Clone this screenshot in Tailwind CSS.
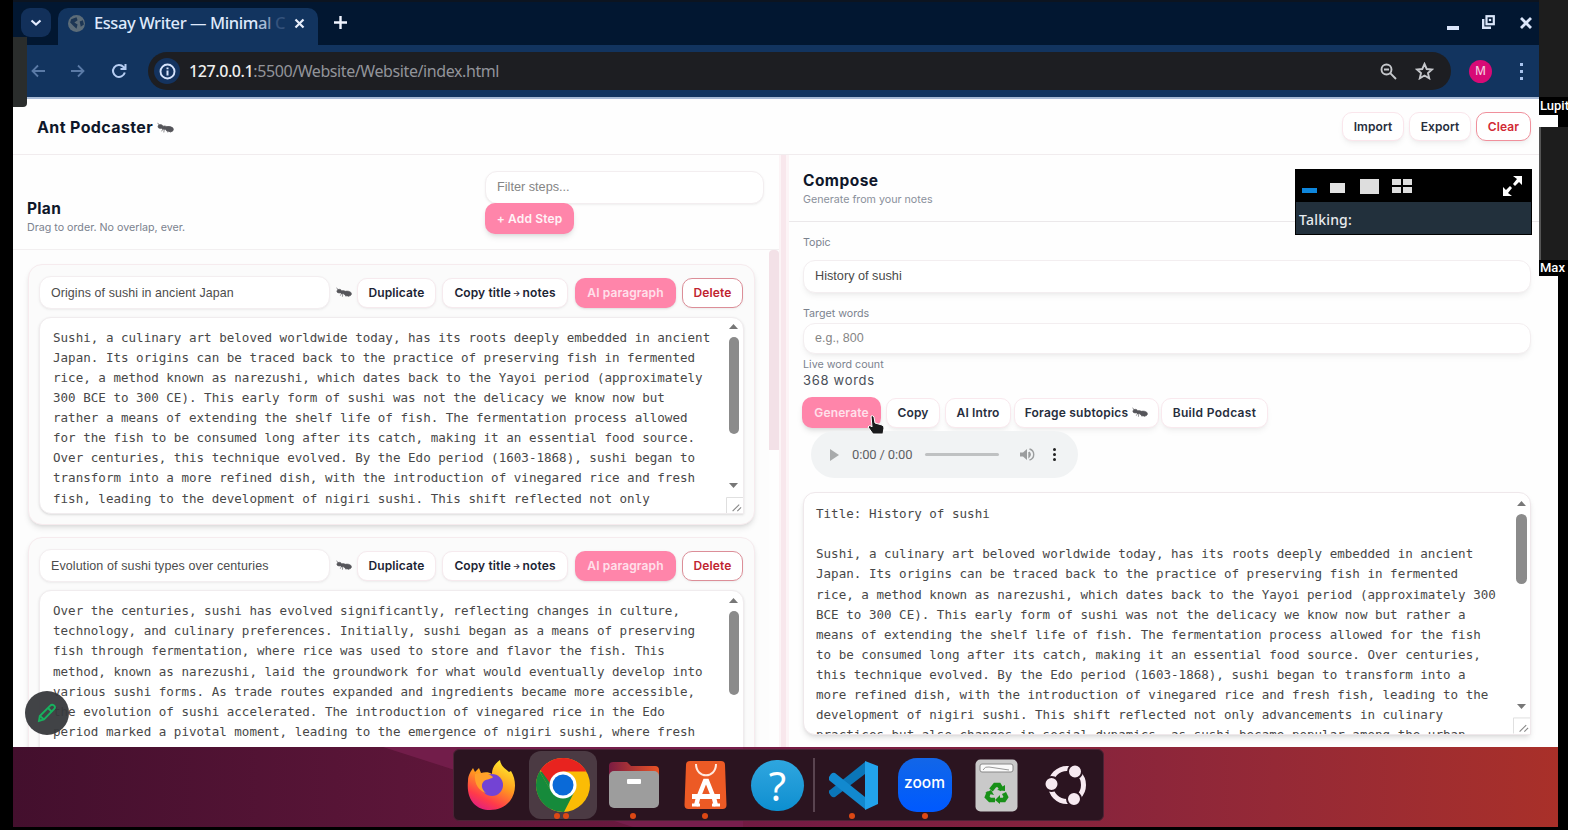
<!DOCTYPE html>
<html lang="en">
<head>
<meta charset="utf-8">
<title>Essay Writer — Minimal</title>
<script src="https://cdn.jsdelivr.net/npm/@tailwindcss/browser@4"></script>
</head>
<body class="bg-white overflow-hidden">
<svg class="hidden">
  <symbol id="ant" viewBox="0 0 30 22"><g fill="#55555a" stroke="#55555a" stroke-width="1.200"><ellipse cx="22" cy="12" rx="7" ry="4.500" transform="rotate(12 22 12)"/><ellipse cx="13" cy="9.500" rx="5" ry="3"/><ellipse cx="6" cy="7.500" rx="4.200" ry="3.500"/><path fill="none" d="M4 5L1 1M11 11L8 16M13 11L12 18M16 11L19 18M18 12L24 18"/></g></symbol>
  <symbol id="grip" viewBox="0 0 18 17"><path d="M.5 17V.5H18" fill="none" stroke="#ddd"/><path d="M7 15L14 8M12 15L16 11" stroke="#888" stroke-width="1.200"/></symbol>
</svg>
<div class="relative w-[1568px] h-[830px] bg-black overflow-hidden">
  <div class="ml-[13px] w-[1545px] h-[827px] flex flex-col bg-[#fefefe]">
    <!-- browser chrome -->
    <div class="w-[1526px] h-[99px] shrink-0 bg-[#12345f] border-b-2 border-[#a9bbd6] font-['Noto_Sans',sans-serif]">
      <div class="h-[45px] bg-[#021731] border-t-2 border-[#0c1420] flex items-end">
        <div class="ml-[8px] mb-[8px] w-[30px] h-[29px] rounded-[9px] bg-[#12305a] flex items-center justify-center">
          <svg class="w-[12px] h-[8px]" viewBox="0 0 12 8"><path d="M1.500 1.500L6 5.500L10.500 1.500" fill="none" stroke="#e4ecff" stroke-width="2.200"/></svg>
        </div>
        <div class="ml-[7px] w-[260px] h-[37px] rounded-t-[10px] bg-[#12345f] flex items-center pl-[10px] pr-[13px] pb-[7px]">
          <svg class="w-[17px] h-[17px] shrink-0" viewBox="0 0 16 16"><circle cx="8" cy="8" r="8" fill="#5c6c78"/><path d="M3 4l5-2 1 3-3 2 3 2-1 4-3-3-3-3zM11 6l3-1 1 4-3 2z" fill="#1d3654"/></svg>
          <div class="ml-[9px] w-[190px] whitespace-nowrap text-[16.500px] leading-[24px] tracking-[-0.420px] font-medium text-[#dfe9fb]">Essay Writer — Minim<span class="text-[#a9bbd6]">a</span><span class="text-[#7d93b5]">l</span> <span class="text-[#34527c]">C</span></div>
          <svg class="ml-auto w-[11px] h-[11px]" viewBox="0 0 11 11"><path d="M1.500 1.500l8 8M9.500 1.500l-8 8" stroke="#e8effc" stroke-width="2.200"/></svg>
        </div>
        <svg class="ml-[16px] mb-[16px] w-[13px] h-[13px]" viewBox="0 0 13 13"><path d="M6.500 0v13M0 6.500h13" stroke="#f1f5ff" stroke-width="2.400"/></svg>
        <div class="ml-auto mb-[15px] mr-[7px] flex items-end">
          <div class="w-[12px] h-[4px] mr-[23px] bg-[#dbe6fa]"></div>
          <svg class="w-[13px] h-[14px] mr-[25px] mb-[1px]" viewBox="0 0 13 14"><path d="M1.200 4v8.800H9" fill="none" stroke="#dbe6fa" stroke-width="2.400"/><rect x="4.500" y="1.200" width="7.300" height="8" fill="none" stroke="#dbe6fa" stroke-width="2.200"/><circle cx="8" cy="5" r="1.300" fill="#dbe6fa"/></svg>
          <svg class="w-[12px] h-[12px] mb-[1px]" viewBox="0 0 12 12"><path d="M1 1l10 10M11 1L1 11" stroke="#dbe6fa" stroke-width="2.800"/></svg>
        </div>
      </div>
      <div class="h-[52px] flex items-center pl-[18px]">
        <svg class="w-[14px] h-[14px]" viewBox="0 0 14 14"><path d="M14 7H1.500M7 1.500L1.500 7L7 12.500" fill="none" stroke="#5a7aa6" stroke-width="1.800"/></svg>
        <svg class="ml-[26px] w-[14px] h-[14px]" viewBox="0 0 14 14"><path d="M0 7H12.500M7 1.500L12.500 7L7 12.500" fill="none" stroke="#5a7aa6" stroke-width="1.800"/></svg>
        <svg class="ml-[26px] w-[16px] h-[16px]" viewBox="0 0 16 16"><path d="M13.800 9.500A6 6 0 1 1 12.500 4L14 5.500M14.500 1V6H9.500" fill="none" stroke="#b6cdf2" stroke-width="2"/></svg>
        <div class="ml-[21px] w-[1303px] h-[38px] rounded-full bg-[#1d1e22] flex items-center pl-[6px] pr-[17px]">
          <div class="w-[26px] h-[26px] rounded-full bg-[#14335f] flex items-center justify-center"><svg class="w-[17px] h-[17px]" viewBox="0 0 17 17"><circle cx="8.500" cy="8.500" r="7" fill="none" stroke="#d6e3fb" stroke-width="1.900"/><path d="M8.500 7.500v5M8.500 4.500v1.800" stroke="#d6e3fb" stroke-width="2"/></svg></div>
          <div class="ml-[9px] whitespace-nowrap text-[16px] leading-[24px] tracking-[-0.410px] text-[#92949a]"><span class="text-[#eeeeee] font-medium">127.0.0.1</span>:5500/Website/Website/index.html</div>
          <svg class="ml-auto w-[17px] h-[17px]" viewBox="0 0 17 17"><circle cx="6.500" cy="6.500" r="5" fill="none" stroke="#c6c8cc" stroke-width="1.900"/><path d="M10.200 10.200L16 16M4 6.500h5" stroke="#c6c8cc" stroke-width="1.900"/></svg>
          <svg class="ml-[18px] w-[19px] h-[18px]" viewBox="0 0 19 18"><path d="M9.500 2l2.200 5 5.300.5-4 3.600 1.200 5.200-4.700-2.800-4.700 2.800L6 11.100 2 7.500l5.300-.5z" fill="none" stroke="#c6c8cc" stroke-width="1.900"/></svg>
        </div>
        <div class="ml-[18px] w-[23px] h-[23px] rounded-full bg-[#d80a76] text-[#f5c9df] text-[12px] font-medium flex items-center justify-center">M</div>
        <div class="ml-[28px] flex flex-col gap-[4px]"><i class="block size-[3px] bg-[#a9c4ee]"></i><i class="block size-[3px] bg-[#a9c4ee]"></i><i class="block size-[3px] bg-[#a9c4ee]"></i></div>
      </div>
    </div>
    <!-- page -->
    <div class="h-[648px] shrink-0 flex flex-col overflow-hidden text-[#0f172a] font-['Inter',sans-serif]">
      <div class="w-[1526px] h-[56px] shrink-0 border-b border-[#f1ecee] flex items-center pl-[24px] pr-[8px]">
        <div class="text-[16px] font-bold whitespace-nowrap tracking-[0.370px]">Ant Podcaster</div>
        <svg class="ml-[4px] w-[17px] h-[15px] mt-[4px]"><use href="#ant"/></svg>
        <div class="ml-auto flex gap-[5px] text-[12px] tracking-[0.100px] font-semibold text-[#272e3d]">
          <div class="w-[62px] h-[29px] rounded-[10px] border border-[#fae6ec] bg-white shadow-md shadow-black/5 flex items-center justify-center">Import</div>
          <div class="w-[62px] h-[29px] rounded-[10px] border border-[#fae6ec] bg-white shadow-md shadow-black/5 flex items-center justify-center">Export</div>
          <div class="w-[55px] h-[29px] rounded-[10px] border border-[#f0909c] bg-white shadow-md shadow-black/5 text-[#d22a35] flex items-center justify-center">Clear</div>
        </div>
      </div>
      <div class="flex grow min-h-0">
        <!-- plan -->
        <section class="w-[766px] flex flex-col">
          <div class="h-[95px] shrink-0 border-b border-[#f2eff0] flex justify-between pl-[14px] pr-[15px]">
            <div class="pt-[43px]">
              <div class="text-[15.500px] leading-[22px] font-bold tracking-[0.300px]">Plan</div>
              <div class="text-[10.700px] leading-[16px] text-[#7b828e] whitespace-nowrap">Drag to order. No overlap, ever.</div>
            </div>
            <div class="pt-[16px] w-[279px]">
              <div class="h-[33px] rounded-[12px] border border-[#f3eef0] bg-white shadow-sm shadow-black/5 flex items-center px-[11px] font-['Liberation_Sans',sans-serif] text-[12.700px] text-[#858585]">Filter steps...</div>
              <div class="-mt-px w-[89px] h-[31px] rounded-[10px] bg-[#ff85aa] shadow-md shadow-black/10 text-[#fff3f6] text-[12px] tracking-[0.150px] font-semibold flex items-center justify-center">+ Add Step</div>
            </div>
          </div>
          <div class="flex grow min-h-0">
            <div class="w-[756px] pl-[15px] pr-[14px] pt-[14px] flex flex-col gap-[12px] bg-[#fdfdfd]">
              <article class="h-[261px] shrink-0 rounded-[14px] border border-[#f6ebee] bg-[#fbfbfb] shadow-md shadow-black/10 pt-[11px] px-[10px]">
                <div class="flex items-center text-[12px] font-semibold whitespace-nowrap tracking-[0.110px] text-[#1c2434]">
                  <div class="w-[291px] h-[33px] rounded-[12px] border border-[#f3eef0] bg-white shadow-sm shadow-black/5 flex items-center px-[11px] pt-px font-['Liberation_Sans',sans-serif] text-[12.400px] font-normal text-[#4c4c4c]">Origins of sushi in ancient Japan</div>
                  <svg class="ml-[6px] w-[16px] h-[14px]"><use href="#ant"/></svg>
                  <div class="ml-[5px] w-[79px] h-[30px] rounded-[10px] border border-[#f6eaee] bg-white shadow-sm shadow-black/5 flex items-center justify-center">Duplicate</div>
                  <div class="ml-[6px] w-[126px] h-[30px] rounded-[10px] border border-[#f6eaee] bg-white shadow-sm shadow-black/5 flex items-center justify-center">Copy title<span class="text-[8px] mx-[2px]">→</span>notes</div>
                  <div class="ml-[7px] w-[101px] h-[30px] rounded-[10px] bg-[#ff85aa] text-[#ffe0ea] shadow-sm shadow-black/10 flex items-center justify-center">AI paragraph</div>
                  <div class="ml-[6px] w-[61px] h-[30px] rounded-[10px] border border-[#dc8e98] bg-white text-[#bf2430] shadow-sm shadow-black/5 flex items-center justify-center">Delete</div>
                </div>
                <div class="mt-[8px] h-[197px] rounded-[12px] rounded-br-none border border-[#f0ecee] bg-white shadow-sm shadow-black/10 flex overflow-hidden pl-[13px]">
<pre class="w-[672px] pt-[10px] font-['DejaVu_Sans_Mono',monospace] text-[12.560px] leading-[20.060px] text-[#484848]">Sushi, a culinary art beloved worldwide today, has its roots deeply embedded in ancient
Japan. Its origins can be traced back to the practice of preserving fish in fermented
rice, a method known as narezushi, which dates back to the Yayoi period (approximately
300 BCE to 300 CE). This early form of sushi was not the delicacy we know now but
rather a means of extending the shelf life of fish. The fermentation process allowed
for the fish to be consumed long after its catch, making it an essential food source.
Over centuries, this technique evolved. By the Edo period (1603-1868), sushi began to
transform into a more refined dish, with the introduction of vinegared rice and fresh
fish, leading to the development of nigiri sushi. This shift reflected not only</pre>
                  <div class="w-[17px] flex flex-col items-center pt-[6px]">
                    <svg class="w-[9px] h-[5px]" viewBox="0 0 9 5"><path d="M0 5L4.500 0L9 5z" fill="#777"/></svg>
                    <div class="mt-[8px] w-[10px] h-[97px] rounded-full bg-[#8b8b8b]"></div>
                    <svg class="mt-[49px] w-[9px] h-[5px]" viewBox="0 0 9 5"><path d="M0 0L4.500 5L9 0z" fill="#777"/></svg>
                    <svg class="mt-[9px] ml-[2px] w-[17px] h-[16px] shrink-0"><use href="#grip"/></svg>
                  </div>
                </div>
              </article>
              <article class="h-[261px] shrink-0 rounded-[14px] border border-[#f6ebee] bg-[#fbfbfb] shadow-md shadow-black/10 pt-[11px] px-[10px]">
                <div class="flex items-center text-[12px] font-semibold whitespace-nowrap tracking-[0.110px] text-[#1c2434]">
                  <div class="w-[291px] h-[33px] rounded-[12px] border border-[#f3eef0] bg-white shadow-sm shadow-black/5 flex items-center px-[11px] pt-px font-['Liberation_Sans',sans-serif] text-[12.500px] font-normal text-[#4c4c4c]">Evolution of sushi types over centuries</div>
                  <svg class="ml-[6px] w-[16px] h-[14px]"><use href="#ant"/></svg>
                  <div class="ml-[5px] w-[79px] h-[30px] rounded-[10px] border border-[#f6eaee] bg-white shadow-sm shadow-black/5 flex items-center justify-center">Duplicate</div>
                  <div class="ml-[6px] w-[126px] h-[30px] rounded-[10px] border border-[#f6eaee] bg-white shadow-sm shadow-black/5 flex items-center justify-center">Copy title<span class="text-[8px] mx-[2px]">→</span>notes</div>
                  <div class="ml-[7px] w-[101px] h-[30px] rounded-[10px] bg-[#ff85aa] text-[#ffe0ea] shadow-sm shadow-black/10 flex items-center justify-center">AI paragraph</div>
                  <div class="ml-[6px] w-[61px] h-[30px] rounded-[10px] border border-[#dc8e98] bg-white text-[#bf2430] shadow-sm shadow-black/5 flex items-center justify-center">Delete</div>
                </div>
                <div class="mt-[8px] h-[197px] rounded-[12px] border border-[#f0ecee] bg-white shadow-sm shadow-black/10 flex overflow-hidden pl-[13px]">
<pre class="w-[672px] pt-[10px] font-['DejaVu_Sans_Mono',monospace] text-[12.560px] leading-[20.180px] text-[#484848]">Over the centuries, sushi has evolved significantly, reflecting changes in culture,
technology, and culinary preferences. Initially, sushi began as a means of preserving
fish through fermentation, where rice was used to store and flavor the fish. This
method, known as narezushi, laid the groundwork for what would eventually develop into
various sushi forms. As trade routes expanded and ingredients became more accessible,
the evolution of sushi accelerated. The introduction of vinegared rice in the Edo
period marked a pivotal moment, leading to the emergence of nigiri sushi, where fresh</pre>
                  <div class="w-[17px] flex flex-col items-center pt-[7px]">
                    <svg class="w-[9px] h-[5px]" viewBox="0 0 9 5"><path d="M0 5L4.500 0L9 5z" fill="#777"/></svg>
                    <div class="mt-[8px] w-[10px] h-[84px] rounded-full bg-[#8b8b8b]"></div>
                  </div>
                </div>
              </article>
            </div>
            <div class="w-[10px]"><div class="h-[200px] rounded-t-[4px] bg-[#f3e1e7]"></div></div>
          </div>
        </section>
        <div class="w-[10px] bg-[#f8e7ec] border-l-2 border-r-3 border-[#fcf4f6]"></div>
        <!-- compose -->
        <section class="w-[769px] flex flex-col">
          <div class="h-[67px] shrink-0 border-b border-[#ebe8ea] pl-[14px] pt-[15px]">
            <div class="text-[15.500px] leading-[22px] font-bold tracking-[0.450px]">Compose</div>
            <div class="text-[10.700px] leading-[15px] text-[#8a909b]">Generate from your notes</div>
          </div>
          <div class="pl-[14px] flex flex-col w-[743px]">
            <div class="mt-[12px] h-[18px] text-[10.700px] leading-[18px] text-[#7b828e]">Topic</div>
            <div class="mt-[8px] w-[728px] h-[33px] rounded-[12px] border border-[#f3eef0] bg-white shadow-md shadow-black/5 flex items-center px-[11px] font-['Liberation_Sans',sans-serif] text-[12.700px] text-[#4a4a4a]">History of sushi</div>
            <div class="mt-[13px] h-[17px] text-[10.700px] leading-[16px] text-[#7b828e]">Target words</div>
            <div class="w-[728px] h-[31px] rounded-[12px] border border-[#f3eef0] bg-white shadow-md shadow-black/5 flex items-center px-[11px] font-['Liberation_Sans',sans-serif] text-[12.500px] text-[#858585]">e.g., 800</div>
            <div class="mt-[4px] h-[14px] text-[10.700px] leading-[14px] text-[#7b828e]">Live word count</div>
            <div class="h-[17px] text-[13px] leading-[17px] tracking-[0.700px] text-[#4a4f58]">368 words</div>
            <div class="mt-[9px] flex text-[12px] tracking-[0.150px] font-semibold whitespace-nowrap text-[#272e3d]">
              <div class="-mt-px -ml-px w-[79px] h-[31px] rounded-[10px] bg-[#ff85aa] text-[#ffe0ea] shadow-md shadow-black/10 flex items-center justify-center">Generate</div>
              <div class="ml-[5px] w-[54px] h-[30px] rounded-[10px] border border-[#f9e9ee] bg-white shadow-md shadow-black/5 flex items-center justify-center">Copy</div>
              <div class="ml-[5px] w-[66px] h-[30px] rounded-[10px] border border-[#f9e9ee] bg-white shadow-md shadow-black/5 flex items-center justify-center">AI Intro</div>
              <div class="ml-[3px] w-[145px] h-[30px] rounded-[10px] border border-[#f9e9ee] bg-white shadow-md shadow-black/5 flex items-center justify-center tracking-[0.220px]">Forage subtopics<svg class="ml-[4px] w-[16px] h-[14px]"><use href="#ant"/></svg></div>
              <div class="ml-[2px] w-[107px] h-[30px] rounded-[10px] border border-[#f9e9ee] bg-white shadow-md shadow-black/5 flex items-center justify-center tracking-[0.330px]">Build Podcast</div>
            </div>
            <div class="mt-[3px] ml-[8px] w-[267px] h-[47px] rounded-full bg-[#f1f3f4] flex items-center pl-[19px] font-['Roboto',sans-serif] text-[13px] text-[#5f6164]">
              <svg class="w-[9px] h-[12px]" viewBox="0 0 9 12"><path d="M0 0l9 6-9 6z" fill="#a8aaab"/></svg>
              <span class="ml-[13px] w-[60px] whitespace-nowrap tracking-[-0.150px]">0:00 / 0:00</span>
              <div class="ml-[13px] w-[74px] h-[3px] rounded-full bg-[#bfc1c2]"></div>
              <svg class="ml-[21px] w-[15px] h-[13px]" viewBox="0 0 15 13"><path d="M0 4.500h3L7 1v11L3 8.500H0z" fill="#9b9d9e"/><path d="M9 4v5q2.500-2.500 0-5M9.500 1a5.700 5.700 0 0 1 0 11" fill="none" stroke="#9b9d9e" stroke-width="1.400"/></svg>
              <div class="ml-[18px] flex flex-col gap-[2px]"><i class="block size-[3px] rounded-full bg-[#222]"></i><i class="block size-[3px] rounded-full bg-[#222]"></i><i class="block size-[3px] rounded-full bg-[#222]"></i></div>
            </div>
            <div class="mt-[14px] h-[243px] w-[728px] rounded-[12px] rounded-br-none border border-[#efe8eb] bg-white shadow-md shadow-black/10 flex overflow-hidden pl-[12px]">
<pre class="w-[697px] pt-[11px] font-['DejaVu_Sans_Mono',monospace] text-[12.560px] leading-[20.130px] text-[#484848]">Title: History of sushi

Sushi, a culinary art beloved worldwide today, has its roots deeply embedded in ancient
Japan. Its origins can be traced back to the practice of preserving fish in fermented
rice, a method known as narezushi, which dates back to the Yayoi period (approximately 300
BCE to 300 CE). This early form of sushi was not the delicacy we know now but rather a
means of extending the shelf life of fish. The fermentation process allowed for the fish
to be consumed long after its catch, making it an essential food source. Over centuries,
this technique evolved. By the Edo period (1603-1868), sushi began to transform into a
more refined dish, with the introduction of vinegared rice and fresh fish, leading to the
development of nigiri sushi. This shift reflected not only advancements in culinary
practices but also changes in social dynamics, as sushi became popular among the urban</pre>
              <div class="w-[17px] flex flex-col items-center pt-[8px]">
                <svg class="w-[9px] h-[5px]" viewBox="0 0 9 5"><path d="M0 5L4.500 0L9 5z" fill="#777"/></svg>
                <div class="mt-[8px] w-[11px] h-[71px] rounded-full bg-[#8b8b8b]"></div>
                <svg class="mt-[120px] w-[9px] h-[5px] shrink-0" viewBox="0 0 9 5"><path d="M0 0L4.500 5L9 0z" fill="#777"/></svg>
                <svg class="mt-[8px] w-[17px] h-[17px] shrink-0"><use href="#grip"/></svg>
              </div>
            </div>
          </div>
        </section>
      </div>
    </div>
    <!-- desktop dock -->
    <div class="relative h-[80px] shrink-0 bg-linear-to-r from-[#430f2d] via-[#741b43] via-50% to-[#a93029] pl-[440px] pt-[2px]">
      <svg class="absolute left-[370px] top-0 w-[360px] h-[80px]" viewBox="0 0 360 80"><path d="M0 0H360V80H250Z" fill="#7a2050" opacity=".75"/></svg>
      <div class="relative w-[651px] h-[72px] rounded-[6px] bg-[#2b1420] border border-[#4b2335] flex items-center pl-px">
        <div class="relative w-[72px] h-[68px] flex items-center justify-center">
          <svg class="w-[50px] h-[52px]" viewBox="0 0 50 52"><defs><linearGradient id="ff" x1=".8" y1="0" x2=".3" y2="1"><stop offset="0" stop-color="#fff22e"/><stop offset=".45" stop-color="#ff9a1f"/><stop offset=".8" stop-color="#ff3a4a"/><stop offset="1" stop-color="#e3207e"/></linearGradient></defs><path d="M2 22C2 16 5 12 7 9l2 4 4-4 2 5c4-1 8-1 11 1 0-7 4-11 8-14 1 7 6 9 9 12l2-1c6 10 5 22-1 30-5 6-12 9-20 9C10 51 0 41 2 22z" fill="url(#ff)"/><circle cx="26" cy="26" r="11" fill="#7343d4"/><path d="M9 15c6-2 14-1 18 3-1 2-6 2-9 4-3 3-3 8 2 12-7-2-12-9-11-19z" fill="#ffa02b"/></svg>
        </div>
        <div class="relative w-[71px] h-[68px] flex items-center justify-center">
          <div class="w-[68px] h-[68px] rounded-[12px] bg-[#4b3a43] flex items-center justify-center"><svg class="w-[56px] h-[56px]" viewBox="0 0 56 56"><circle cx="28" cy="28" r="27" fill="#fbbc05"/><path d="M4.600 14.500A27 27 0 0 0 29 55L39.500 34.500L28 28 16.500 34.500z" fill="#168a3b"/><path d="M4.600 14.500L16.300 34.500 28 15z" fill="#168a3b"/><path d="M5.500 13A27 27 0 0 1 51.400 14.500H28L15 26z" fill="#e8231f"/><circle cx="28" cy="28" r="13.500" fill="#fff"/><circle cx="28" cy="28" r="10.500" fill="#0a6ad8"/></svg></div>
          <i class="absolute top-[62px] left-[27px] size-[6px] rounded-full bg-[#dd4814]"></i><i class="absolute top-[62px] left-[36px] size-[6px] rounded-full bg-[#dd4814]"></i>
        </div>
        <div class="relative w-[72px] h-[68px] flex items-center justify-center">
          <svg class="w-[52px] h-[48px]" viewBox="0 0 52 48"><defs><linearGradient id="fo"><stop offset="0" stop-color="#7b1c42"/><stop offset="1" stop-color="#ea5325"/></linearGradient></defs><path d="M1 5q0-4 4-4h14l4 4h24q4 0 4 4v12H1z" fill="url(#fo)"/><rect x="1" y="10" width="50" height="37" rx="5" fill="#9d9d9d"/><rect x="19" y="18" width="14" height="5" rx="1" fill="#fff"/></svg>
          <i class="absolute top-[62px] left-[32px] size-[6px] rounded-full bg-[#dd4814]"></i>
        </div>
        <div class="relative w-[72px] h-[68px] flex items-center justify-center">
          <svg class="w-[44px] h-[50px]" viewBox="0 0 44 50"><path d="M6 1h31q4 0 4 4l1.500 40q0 4-4 4h-34q-4 0-4-4L2 5q0-4 4-4z" fill="#ec5a25"/><path d="M12 4c0 15 20 15 20 0" fill="none" stroke="#ffe9df" stroke-width="2"/><path d="M15 36L21 21h2l6 15M12 46l2-8M32 46l-2-8" fill="none" stroke="#fff" stroke-width="4.500"/><path d="M8 36.500h28" stroke="#fff" stroke-width="5"/><path d="M8 45h8M28 45h8" stroke="#fff" stroke-width="3"/></svg>
          <i class="absolute top-[62px] left-[32px] size-[6px] rounded-full bg-[#dd4814]"></i>
        </div>
        <div class="w-[71px] h-[68px] flex items-center justify-center"><div class="w-[53px] h-[51px] rounded-full bg-linear-to-b from-[#2ea6df] to-[#0b8fd0] text-white font-['Noto_Sans',sans-serif] text-[40px] leading-[51px] text-center">?</div></div>
        <div class="w-[2px] h-[54px] bg-[#5a4450]"></div>
        <div class="relative w-[72px] h-[68px] ml-[2px] flex items-center justify-center">
          <svg class="w-[49px] h-[49px]" viewBox="0 0 49 49"><path d="M36 1v12L6 36q-2 1-4-1l-2-3q-1-2 1-3z" fill="#0b76b8"/><path d="M36 48V36L6 12q-2-1-4 1L0 16q-1 2 1 4z" fill="#1289cf"/><path d="M36 0l13 5v38l-13 6z" fill="#22a3ec"/></svg>
          <i class="absolute top-[62px] left-[32px] size-[6px] rounded-full bg-[#dd4814]"></i>
        </div>
        <div class="relative w-[71px] h-[68px] flex items-center justify-center"><div class="w-[54px] h-[54px] rounded-[19px] bg-linear-to-b from-[#1266e8] to-[#0059ff] text-white font-['Inter',sans-serif] font-medium text-[15.500px] leading-[50px] text-center">zoom</div>
          <i class="absolute top-[62px] left-[33px] size-[6px] rounded-full bg-[#dd4814]"></i></div>
        <div class="w-[72px] h-[68px] flex items-center justify-center"><svg class="w-[43px] h-[53px]" viewBox="0 0 43 53"><rect x=".5" y=".5" width="42" height="52" rx="5" fill="#c9c9c9"/><rect x="5" y="5" width="33" height="8" rx="2" fill="#fafafa" stroke="#888"/><path d="M8 11q2-4 6-3l20 3" fill="none" stroke="#999"/><g fill="none" stroke="#189018" stroke-width="4.500"><path d="M16 31l4-5h4l3 5M29 34l2 4-2 3h-6M20 41h-5l-3-3 2-5"/></g><path d="M22 31l8 1 0-6zM25 36v9l-5-4zM10 34l6-3 3 5z" fill="#189018"/></svg></div>
        <div class="w-[67px] h-[68px] flex items-center justify-center"><svg class="w-[42px] h-[42px]" viewBox="0 0 42 42"><circle cx="22" cy="21" r="16.500" fill="none" stroke="#f7eaf1" stroke-width="5"/><g fill="#f7eaf1" stroke="#2b1420" stroke-width="2"><circle cx="6.500" cy="20" r="7"/><circle cx="30" cy="7.500" r="7"/><circle cx="29" cy="35" r="7"/></g></svg></div>
      </div>
    </div>
  </div>

  <!-- left edge panel -->
  <div class="absolute left-[13px] top-[37px] w-[14px] h-[70px] rounded-br-[4px] bg-[#2a2d2c]"></div>
  <!-- annotate button -->
  <div class="absolute left-[25px] top-[691px] w-[44px] h-[44px] rounded-full bg-[#37393c]/95 flex items-center justify-center">
    <svg class="w-[20px] h-[20px]" viewBox="0 0 20 20"><g fill="none" stroke="#17b25e" stroke-width="1.900"><path d="M2 18l.8-5L13 2.800q2-2 4-.3t0 3.700L7 16.500z"/><path d="M11 5l4 4M3 13l4 3.500"/></g></svg>
  </div>
  <!-- pointer -->
  <svg class="absolute left-[867px] top-[415px] w-[18px] h-[21px]" viewBox="0 0 18 21"><path d="M4 1q2-1 3 1l1 6 7 2q2 1 2 3l-1 6H6l-5-7q1-2 3-1l1 1z" fill="#1b1b1d" stroke="#fff" stroke-width="1"/></svg>
  <!-- meeting panel -->
  <div class="absolute left-[1295px] top-[169px] w-[237px] h-[66px] border border-black bg-[#22303c] font-['Noto_Sans',sans-serif]">
    <div class="h-[32px] bg-black flex items-center pl-[6px] pr-[9px]">
      <div class="w-[15px] h-[5px] mt-[9px] bg-[#0e86dc]"></div>
      <div class="ml-[13px] mt-[4px] w-[15px] h-[10px] bg-[#e2e2e2]"></div>
      <div class="ml-[15px] w-[19px] h-[15px] bg-[#dedede]"></div>
      <div class="ml-[13px] grid grid-cols-2 gap-[2px]"><i class="w-[9px] h-[6px] bg-[#dedede]"></i><i class="w-[9px] h-[6px] bg-[#dedede]"></i><i class="w-[9px] h-[6px] bg-[#dedede]"></i><i class="w-[9px] h-[6px] bg-[#dedede]"></i></div>
      <svg class="ml-auto w-[19px] h-[20px]" viewBox="0 0 19 20"><path d="M10 0h9v9l-3-3-4 4-2-2 4-5zM9 20H0v-9l3 3 4-4 2 2-4 5z" fill="#fff"/></svg>
    </div>
    <div class="pl-[3px] pt-px text-[14px] leading-[34px] font-medium tracking-[0.200px] text-[#e8ebee]">Talking:</div>
  </div>
  <!-- participants strip -->
  <div class="absolute left-[1539px] top-0 w-[29px] h-[276px] flex flex-col bg-black text-white font-['Roboto',sans-serif] text-[13px] font-medium overflow-hidden">
    <div class="h-[97px] shrink-0 bg-[#1d1d1d]"></div>
    <div class="h-[18px] shrink-0 pl-px leading-[18px] whitespace-nowrap">Lupit</div>
    <div class="h-[12px] w-[19px] shrink-0 bg-white"></div>
    <div class="h-[133px] shrink-0 border-l-2 border-[#555] bg-[#1d1d1d]"></div>
    <div class="h-[16px] shrink-0 pl-px leading-[16px]">Max</div>
  </div>
  <div class="absolute left-[1558px] top-[276px] w-[10px] h-[554px] bg-black"></div>
</div>
</body>
</html>
